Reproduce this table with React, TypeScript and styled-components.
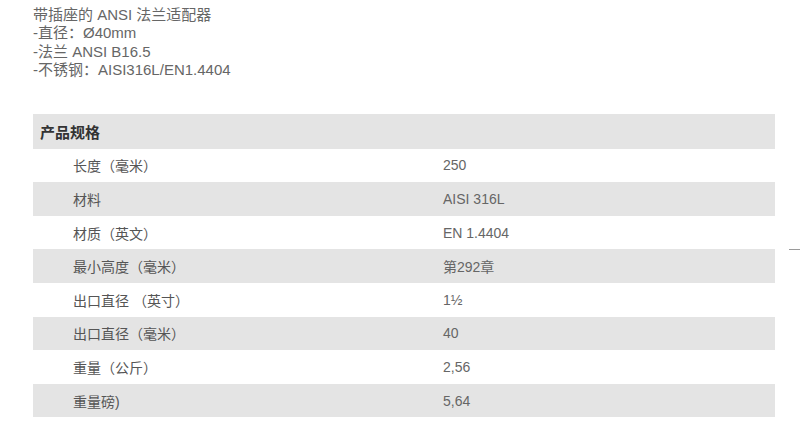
import React from "react";
import styled, { createGlobalStyle } from "styled-components";

const Global = createGlobalStyle`
  html, body { margin: 0; padding: 0; background: #ffffff; }
  body { width: 800px; height: 435px; overflow: hidden; position: relative; }
`;

const Page = styled.div`
  padding: 6px 25px 0 33px;
  font-family: "Liberation Sans", Arial, "Noto Sans CJK SC", sans-serif;
  color: #666;
`;

const Intro = styled.div`
  font-size: 15px;
  line-height: 18.4px;
  color: #666;
  margin-bottom: 34px;
`;

const Table = styled.div`
  display: flex;
  flex-direction: column;
  width: 742px;
`;

const HeaderRow = styled.div`
  height: 35px;
  background: #e4e4e4;
  display: flex;
  align-items: center;
  padding-left: 7px;
  font-size: 15px;
  font-weight: bold;
  color: #333;
  font-family: "Noto Sans CJK SC", "Liberation Sans", sans-serif;
`;

const Row = styled.div<{ $shaded: boolean }>`
  height: 33.6px;
  background: ${(p) => (p.$shaded ? "#e4e4e4" : "#ffffff")};
  display: grid;
  grid-template-columns: 370px 1fr;
  align-items: center;
  padding-left: 40px;
  font-size: 14px;
  color: #666;
`;

const Label = styled.span`
  color: #555;
`;

const Value = styled.span`
  color: #666;
`;

const EdgeMark = styled.div`
  position: absolute;
  left: 789px;
  top: 249px;
  width: 11px;
  height: 1px;
  background: #9a9a9a;
`;

const rows: [string, string][] = [
  ["长度（毫米）", "250"],
  ["材料", "AISI 316L"],
  ["材质（英文）", "EN 1.4404"],
  ["最小高度（毫米）", "第292章"],
  ["出口直径 （英寸）", "1½"],
  ["出口直径（毫米）", "40"],
  ["重量（公斤）", "2,56"],
  ["重量磅)", "5,64"],
];

export default function App() {
  return (
    <>
      <Global />
      <Page>
        <Intro>
          <div>带插座的 ANSI 法兰适配器</div>
          <div>-直径：Ø40mm</div>
          <div>-法兰 ANSI B16.5</div>
          <div>-不锈钢：AISI316L/EN1.4404</div>
        </Intro>
        <Table>
          <HeaderRow>产品规格</HeaderRow>
          {rows.map(([l, v], i) => (
            <Row key={l} $shaded={i % 2 === 1}>
              <Label>{l}</Label>
              <Value>{v}</Value>
            </Row>
          ))}
        </Table>
      </Page>
      <EdgeMark />
    </>
  );
}
